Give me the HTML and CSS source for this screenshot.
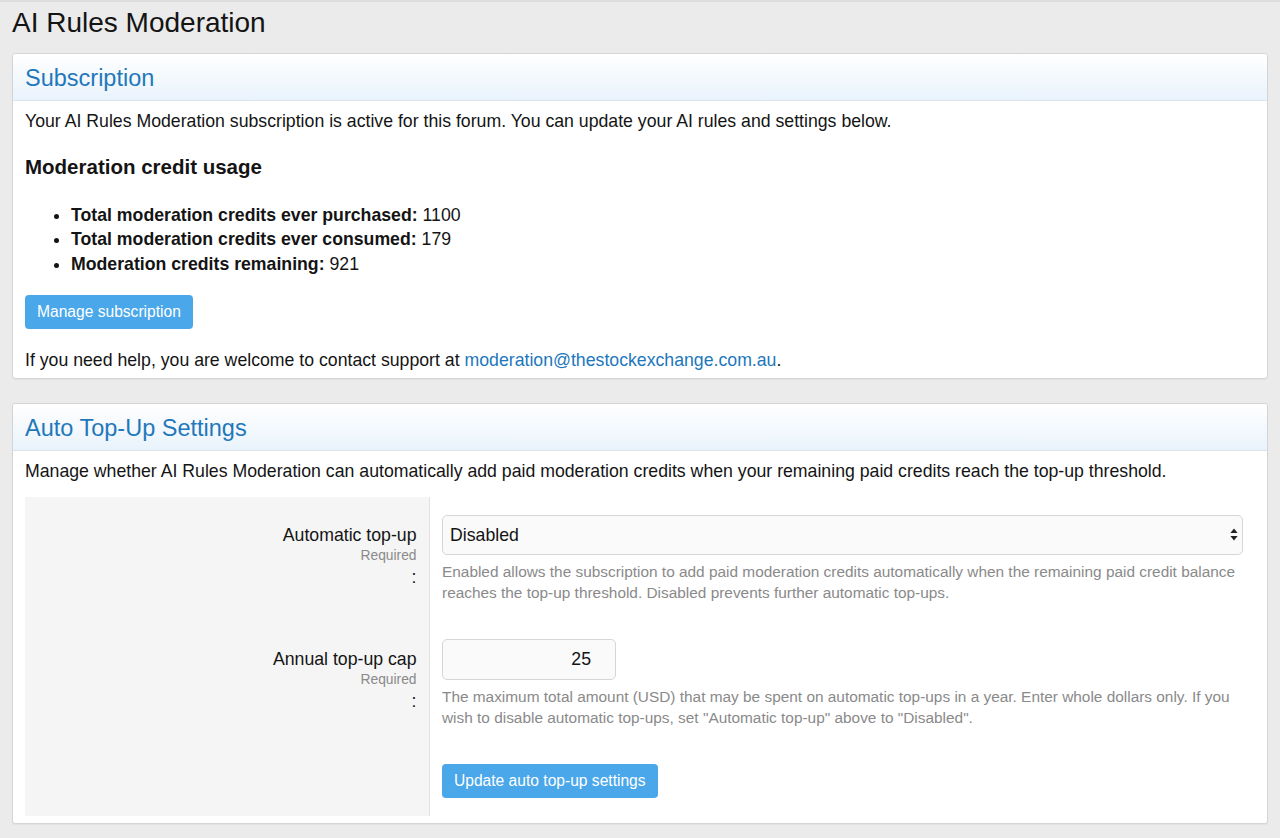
FILE: index.html
```html
<!DOCTYPE html>
<html lang="en">
<head>
<meta charset="utf-8">
<title>AI Rules Moderation</title>
<link rel="stylesheet" href="styles.css">
</head>
<body>
<h1 class="page-title">AI Rules Moderation</h1>

<section class="panel">
  <header class="panel-header"><h2 class="panel-title">Subscription</h2></header>
  <div class="panel-body">
    <p class="text">Your AI Rules Moderation subscription is active for this forum. You can update your AI rules and settings below.</p>
    <h3 class="subheading">Moderation credit usage</h3>
    <ul class="usage-list">
      <li><strong>Total moderation credits ever purchased:</strong> 1100</li>
      <li><strong>Total moderation credits ever consumed:</strong> 179</li>
      <li><strong>Moderation credits remaining:</strong> 921</li>
    </ul>
    <button class="button manage-button" type="button">Manage subscription</button>
    <p class="text help-text">If you need help, you are welcome to contact support at <a class="link" href="#">moderation@thestockexchange.com.au</a>.</p>
  </div>
</section>

<section class="panel panel-second">
  <header class="panel-header"><h2 class="panel-title">Auto Top-Up Settings</h2></header>
  <div class="panel-body panel-body-form">
    <p class="text">Manage whether AI Rules Moderation can automatically add paid moderation credits when your remaining paid credits reach the top-up threshold.</p>
    <form class="form">
      <div class="form-row">
        <div class="form-label">
          <div class="label-main">Automatic top-up</div>
          <div class="label-required">Required</div>
          <div class="label-colon">:</div>
        </div>
        <div class="form-field">
          <div class="select-wrap">
            <select class="select">
              <option>Disabled</option>
              <option>Enabled</option>
            </select>
            <svg class="select-arrows" width="8" height="13" viewBox="0 0 8 13" aria-hidden="true">
              <path d="M4 0.5 L7.6 5 L0.4 5 Z" fill="#222"/>
              <path d="M4 12.5 L7.6 8 L0.4 8 Z" fill="#222"/>
            </svg>
          </div>
          <p class="hint">Enabled allows the subscription to add paid moderation credits automatically when the remaining paid credit balance reaches the top-up threshold. Disabled prevents further automatic top-ups.</p>
        </div>
      </div>
      <div class="form-row">
        <div class="form-label">
          <div class="label-main">Annual top-up cap</div>
          <div class="label-required">Required</div>
          <div class="label-colon">:</div>
        </div>
        <div class="form-field">
          <input class="input" type="text" value="25">
          <p class="hint">The maximum total amount (USD) that may be spent on automatic top-ups in a year. Enter whole dollars only. If you wish to disable automatic top-ups, set "Automatic top-up" above to "Disabled".</p>
        </div>
      </div>
      <div class="form-row form-row-submit">
        <div class="form-label"></div>
        <div class="form-field">
          <button class="button" type="submit">Update auto top-up settings</button>
        </div>
      </div>
    </form>
  </div>
</section>
</body>
</html>
```

FILE: styles.css
```css
html, body {
  margin: 0;
  padding: 0;
}
body {
  background: #ebebeb;
  border-top: 2px solid #dedede;
  padding: 0 12px 14px 12px;
  font-family: "Liberation Sans", Arial, Helvetica, sans-serif;
  font-size: 17.7px;
  color: #141414;
}
.page-title {
  margin: 4px 0 13px 0;
  font-size: 28px;
  line-height: 34px;
  font-weight: normal;
  color: #141414;
}
.panel {
  background: #fff;
  border: 1px solid #d4d4d4;
  border-radius: 3px;
  box-shadow: 0 1px 1px rgba(0,0,0,0.04);
}
.panel-second {
  margin-top: 24px;
}
.panel-header {
  height: 47px;
  box-sizing: border-box;
  padding: 0 12px;
  background: linear-gradient(to bottom, #ffffff 0%, #f4f9fd 50%, #e9f3fc 100%);
  border-bottom: 1px solid #dde3e8;
  border-radius: 3px 3px 0 0;
  display: flex;
  align-items: center;
}
.panel-title {
  margin: 0;
  font-size: 23.5px;
  font-weight: normal;
  line-height: 28px;
  color: #1f78bb;
  padding-top: 2px;
}
.panel-body {
  padding: 8px 12px 5px 12px;
}
.panel-body-form {
  padding-bottom: 7px;
}
.text {
  margin: 0;
  line-height: 24.5px;
}
.subheading {
  margin: 21px 0 0 0;
  font-size: 20.5px;
  line-height: 24.6px;
  font-weight: bold;
}
.usage-list {
  margin: 23.5px 0 0 0;
  padding-left: 46px;
  line-height: 24.5px;
}
.usage-list li {
  height: 24.5px;
}
.usage-list strong {
  font-weight: bold;
}
.button {
  display: inline-block;
  height: 34px;
  padding: 0 12px;
  border: none;
  border-radius: 4px;
  background: #49a7ea;
  color: #fff;
  font-family: inherit;
  font-size: 15.6px;
  line-height: 34px;
  cursor: pointer;
}
.manage-button {
  margin-top: 19px;
}
.help-text {
  margin-top: 19px;
}
.link {
  color: #1c77bd;
  text-decoration: none;
}
.form {
  margin-top: 13.5px;
  display: flex;
  flex-direction: column;
}
.form-row {
  display: flex;
}
.form-label {
  flex: 0 0 405px;
  box-sizing: border-box;
  background: #f5f5f5;
  border-right: 1px solid #e2e2e2;
  text-align: right;
  padding: 28px 12.5px 0 0;
}
.label-main {
  line-height: 21px;
}
.label-required {
  font-size: 13.8px;
  line-height: 20px;
  color: #8a8a8a;
}
.label-colon {
  line-height: 22px;
}
.form-field {
  flex: 1;
  padding: 18px 12px 17.5px 12px;
}
.select-wrap {
  position: relative;
}
.select {
  display: block;
  width: 100%;
  height: 40px;
  box-sizing: border-box;
  appearance: none;
  -webkit-appearance: none;
  background: #fafafa;
  border: 1px solid #d6d6d6;
  border-radius: 5px;
  padding: 0 30px 0 7px;
  font-family: inherit;
  font-size: 17.7px;
  color: #141414;
}
.select-arrows {
  position: absolute;
  right: 5px;
  top: 13px;
  pointer-events: none;
}
.input {
  display: block;
  width: 174px;
  height: 41px;
  box-sizing: border-box;
  background: #fafafa;
  border: 1px solid #d6d6d6;
  border-radius: 5px;
  padding: 0 24px 0 7px;
  text-align: right;
  font-family: inherit;
  font-size: 17.7px;
  color: #141414;
}
.hint {
  margin: 6.5px 0 0 0;
  font-size: 15.4px;
  line-height: 21px;
  color: #8a8a8a;
}
.form-row-submit .form-field {
  padding-bottom: 18px;
}
```
